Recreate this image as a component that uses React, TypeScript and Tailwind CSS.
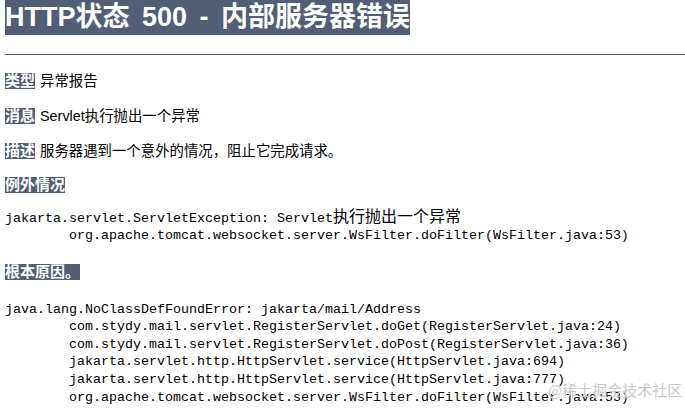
const sans = "font-['Liberation_Sans','Noto_Sans_CJK_SC',sans-serif]";

const Label = ({ children }: { children: React.ReactNode }) => (
  <span className="inline-block h-[16px] bg-[#525D76] text-[15px] font-bold leading-[16px] text-white align-top">
    {children}
  </span>
);

const Cjk = ({ children }: { children: React.ReactNode }) => (
  <span className="font-['Noto_Sans_CJK_SC',sans-serif] text-[16px] leading-none">{children}</span>
);

const stack = [
  "com.stydy.mail.servlet.RegisterServlet.doGet(RegisterServlet.java:24)",
  "com.stydy.mail.servlet.RegisterServlet.doPost(RegisterServlet.java:36)",
  "jakarta.servlet.http.HttpServlet.service(HttpServlet.java:694)",
  "jakarta.servlet.http.HttpServlet.service(HttpServlet.java:777)",
  "org.apache.tomcat.websocket.server.WsFilter.doFilter(WsFilter.java:53)",
];

export default function App() {
  return (
    <div className={`relative h-[411px] w-[685px] overflow-hidden bg-white pl-[5px] text-black ${sans}`}>
      {/* title */}
      <h1 className="w-fit bg-[#525D76] px-0 text-[27px] font-bold leading-[35px] text-white [word-spacing:5px]">
        HTTP状态 500 - 内部服务器错误
      </h1>
      <hr className="mt-[19px] border-0 border-t border-[#525D76]" />

      <p className="mt-[18px] flex h-[16px] items-center gap-[5px] text-[14.4px] leading-[16px]">
        <Label>类型</Label>
        <span>异常报告</span>
      </p>
      <p className="mt-[19px] flex h-[16px] items-center gap-[5px] text-[14.4px] leading-[16px]">
        <Label>消息</Label>
        <span>Servlet执行抛出一个异常</span>
      </p>
      <p className="mt-[19px] flex h-[16px] items-center gap-[5px] text-[14.4px] leading-[16px]">
        <Label>描述</Label>
        <span>服务器遇到一个意外的情况，阻止它完成请求。</span>
      </p>

      <h3 className="mt-[18px] flex h-[16px]">
        <Label>例外情况</Label>
      </h3>
      <pre className="mt-[14px] font-['Liberation_Mono',monospace] text-[13.33px] leading-[17.6px] [tab-size:8]">
        <div className="h-[20px] leading-[20px]">
          jakarta.servlet.ServletException: Servlet<Cjk>执行抛出一个异常</Cjk>
        </div>
        <div>{"\torg.apache.tomcat.websocket.server.WsFilter.doFilter(WsFilter.java:53)"}</div>
      </pre>

      <h3 className="mt-[19px] flex h-[16px]">
        <Label>根本原因。</Label>
      </h3>
      <pre className="mt-[21px] font-['Liberation_Mono',monospace] text-[13.33px] leading-[17.6px] [tab-size:8]">
        <div>java.lang.NoClassDefFoundError: jakarta/mail/Address</div>
        {stack.map((line) => (
          <div key={line}>{"\t" + line}</div>
        ))}
      </pre>

      {/* watermark */}
      <div className="absolute left-[548px] top-[380px] font-['Noto_Sans_CJK_SC',sans-serif] text-[15px] leading-[20px] text-[#c9c9c9] [text-shadow:0_0_1px_rgba(255,255,255,0.9)]">
        @稀土掘金技术社区
      </div>
    </div>
  );
}
